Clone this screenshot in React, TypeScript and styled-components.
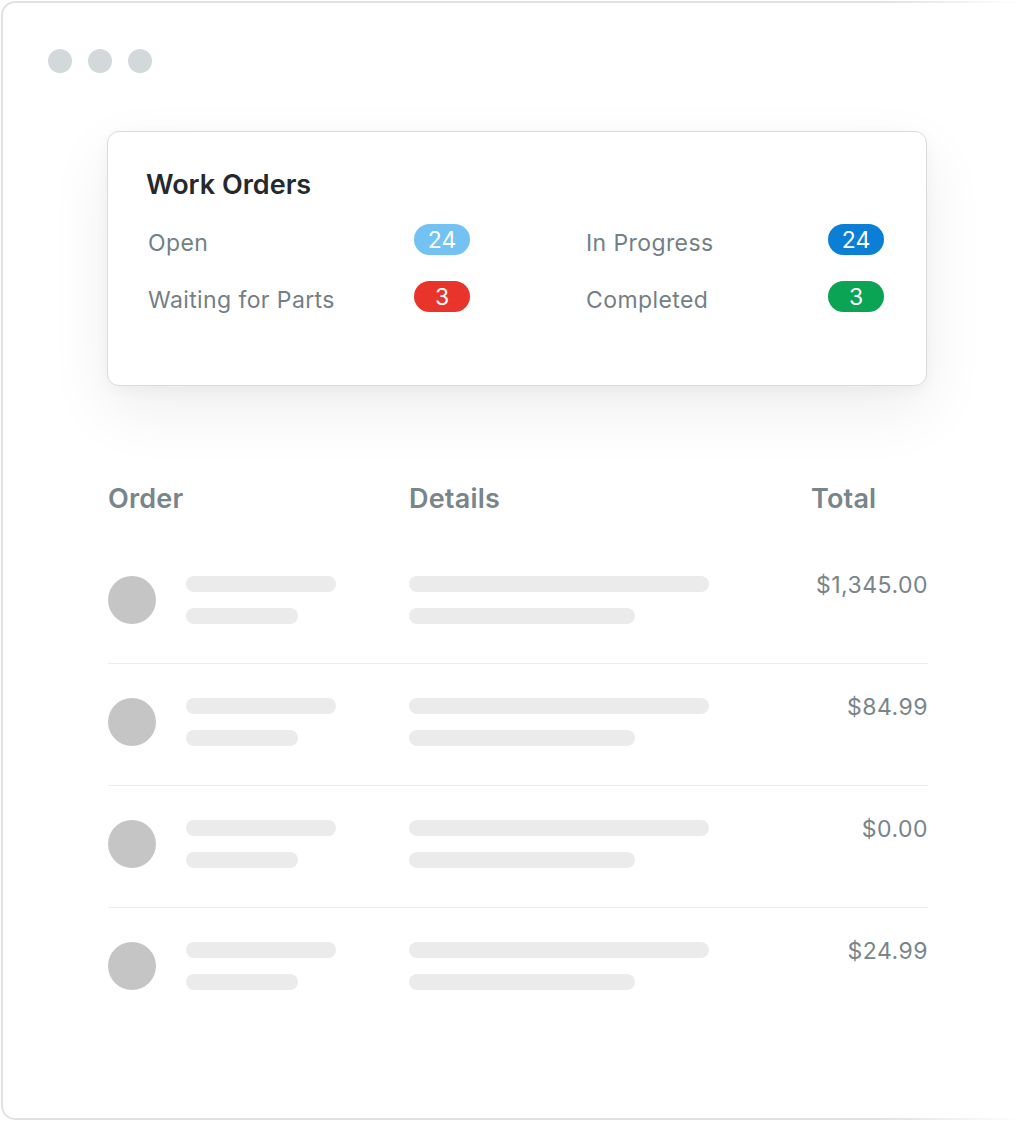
import React from 'react';
import styled, { createGlobalStyle } from 'styled-components';

interface Stat {
  label: string;
  count: number;
  color: string;
}

interface Order {
  id: number;
  total: string;
}

const stats: Stat[] = [
  { label: 'Open', count: 24, color: '#74c1f3' },
  { label: 'In Progress', count: 24, color: '#0a7fd5' },
  { label: 'Waiting for Parts', count: 3, color: '#e8342b' },
  { label: 'Completed', count: 3, color: '#0ba354' },
];

const orders: Order[] = [
  { id: 1, total: '$1,345.00' },
  { id: 2, total: '$84.99' },
  { id: 3, total: '$0.00' },
  { id: 4, total: '$24.99' },
];

const GlobalStyle = createGlobalStyle`
  html, body {
    margin: 0;
    padding: 0;
    background: #fff;
    overflow: hidden;
  }
  body {
    font-family: Inter, "Open Sans", "Liberation Sans", sans-serif;
    -webkit-font-smoothing: antialiased;
  }
`;

const Page = styled.div`
  width: 1032px;
  height: 1121px;
  padding: 1px 0 0 1px;
  box-sizing: border-box;
`;

const Window = styled.div`
  position: relative;
  width: 1080px;
  height: 1119px;
  box-sizing: border-box;
  padding: 2px;

  &::after {
    content: '';
    position: absolute;
    inset: 0;
    border: 2px solid #dfe1e2;
    border-radius: 14px;
    pointer-events: none;
    -webkit-mask-image: linear-gradient(to right, #000 0, #000 880px, transparent 1020px);
    mask-image: linear-gradient(to right, #000 0, #000 880px, transparent 1020px);
  }
`;

const DotRow = styled.div`
  display: flex;
  gap: 16px;
  padding: 46px 0 0 45px;
`;

const Dot = styled.span`
  width: 24px;
  height: 24px;
  border-radius: 50%;
  background: #d3d8db;
`;

const Card = styled.div`
  width: 820px;
  height: 255px;
  box-sizing: border-box;
  margin: 58px 0 0 104px;
  padding: 38px 38px 0;
  background: #fff;
  border: 1px solid #d9dcdd;
  border-radius: 12px;
  box-shadow: 0 24px 64px rgba(0, 0, 0, 0.07), 0 4px 14px rgba(0, 0, 0, 0.04);
`;

const CardTitle = styled.h3`
  margin: 0;
  font-size: 27px;
  line-height: 30px;
  font-weight: 600;
  color: #23292c;
`;

const StatGrid = styled.div`
  display: grid;
  grid-template-columns: 324px 300px;
  column-gap: 114px;
  row-gap: 17px;
  margin-top: 23px;
`;

const StatRow = styled.div`
  display: flex;
  align-items: center;
  justify-content: space-between;
  height: 40px;
`;

const StatLabel = styled.span`
  font-size: 23px;
  letter-spacing: 0.4px;
  color: #737f86;
  padding-left: 2px;
`;

const Badge = styled.span<{ $color: string }>`
  display: inline-flex;
  align-items: center;
  justify-content: center;
  width: 56px;
  height: 31px;
  margin-top: -7px;
  border-radius: 16px;
  background: ${p => p.$color};
  color: #fff;
  font-size: 23px;
`;

const Table = styled.div`
  width: 820px;
  margin: 96px 0 0 105px;
`;

const Grid = styled.div`
  display: grid;
  grid-template-columns: 301px 402px 117px;
`;

const HeaderRow = styled(Grid)`
  height: 28px;
  align-items: center;
  margin-bottom: 66px;
`;

const HeaderCell = styled.div`
  font-size: 27px;
  font-weight: 600;
  letter-spacing: 0.2px;
  color: #78858b;
`;

const OrderRow = styled(Grid)<{ $last?: boolean }>`
  padding: 0 0 39px;
  margin-bottom: 34px;
  border-bottom: ${p => (p.$last ? 'none' : '1px solid #ececec')};
`;

const OrderCell = styled.div`
  display: flex;
  align-items: center;
  gap: 30px;
`;

const Avatar = styled.span`
  width: 48px;
  height: 48px;
  border-radius: 50%;
  background: #c5c5c5;
  flex-shrink: 0;
`;

const Lines = styled.div`
  display: flex;
  flex-direction: column;
  gap: 16px;
`;

const Bar = styled.span<{ $w: number }>`
  display: block;
  width: ${p => p.$w}px;
  height: 16px;
  border-radius: 8px;
  background: #ebebeb;
`;

const Amount = styled.div`
  text-align: right;
  font-size: 23px;
  letter-spacing: 0.5px;
  line-height: 18px;
  color: #78858b;
`;

const App: React.FC = () => {
  const left = [stats[0], stats[2]];
  const right = [stats[1], stats[3]];
  const ordered = [left[0], right[0], left[1], right[1]];

  return (
    <>
      <GlobalStyle />
      <Page>
        <Window>
          <DotRow>
            <Dot />
            <Dot />
            <Dot />
          </DotRow>
          <Card>
            <CardTitle>Work Orders</CardTitle>
            <StatGrid>
              {ordered.map(s => (
                <StatRow key={s.label}>
                  <StatLabel>{s.label}</StatLabel>
                  <Badge $color={s.color}>{s.count}</Badge>
                </StatRow>
              ))}
            </StatGrid>
          </Card>
          <Table>
            <HeaderRow>
              <HeaderCell>Order</HeaderCell>
              <HeaderCell>Details</HeaderCell>
              <HeaderCell>Total</HeaderCell>
            </HeaderRow>
            {orders.map((o, i) => (
              <OrderRow key={o.id} $last={i === orders.length - 1}>
                <OrderCell>
                  <Avatar />
                  <Lines>
                    <Bar $w={150} />
                    <Bar $w={112} />
                  </Lines>
                </OrderCell>
                <Lines>
                  <Bar $w={300} />
                  <Bar $w={226} />
                </Lines>
                <Amount>{o.total}</Amount>
              </OrderRow>
            ))}
          </Table>
        </Window>
      </Page>
    </>
  );
};

export default App;
